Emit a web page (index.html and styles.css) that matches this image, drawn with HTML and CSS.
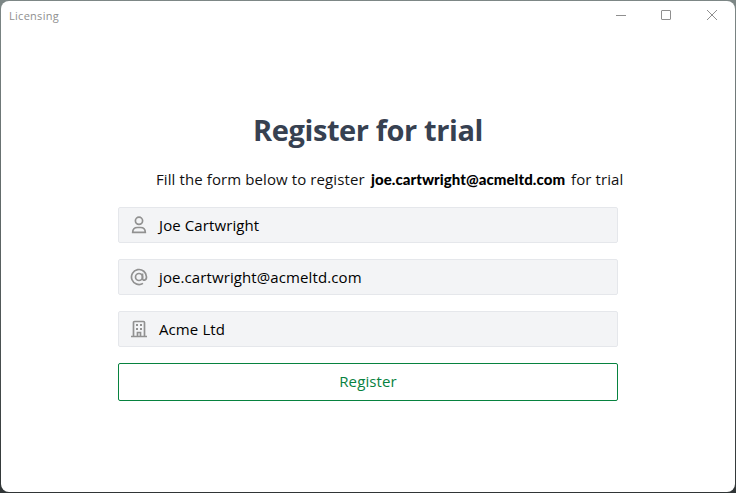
FILE: index.html
```
<!DOCTYPE html>
<html lang="en">
<head>
    <meta charset="UTF-8">
    <title>Licensing</title>
    <link rel="stylesheet" href="styles.css">
</head>
<body>
    <div class="window">
        <div class="title-bar">
            <span class="title">Licensing</span>
            <div class="controls">
                <svg width="12" height="12" viewBox="0 0 12 12"><path d="M1 6.5h10"/></svg>
                <svg width="12" height="12" viewBox="0 0 12 12"><rect x="1.5" y="1.5" width="9" height="9" rx="0.5"/></svg>
                <svg width="12" height="12" viewBox="0 0 12 12"><path d="M1 1l10 10M11 1L1 11"/></svg>
            </div>
        </div>
        <div class="content">
            <h1>Register for trial</h1>
            <p class="intro"><span class="before">Fill the form below to register</span><b>joe.cartwright@acmeltd.com</b><span>for trial</span></p>
            <div class="form">
                <div class="field">
                    <svg width="18" height="18" viewBox="0 0 18 18"><circle cx="9" cy="4.8" r="3.6"/><path d="M2.7 16.3c0-3.1 2.1-4.8 4.8-4.8h3c2.7 0 4.8 1.7 4.8 4.8z"/></svg>
                    <span>Joe Cartwright</span>
                </div>
                <div class="field">
                    <svg width="18" height="18" viewBox="0 0 18 18"><circle cx="9" cy="9" r="3.5"/><path d="M12.5 5.5v4.7c0 3 4 2.6 4-1.2a7.5 7.5 0 1 0-3.5 6.35"/></svg>
                    <span>joe.cartwright@acmeltd.com</span>
                </div>
                <div class="field">
                    <svg width="18" height="18" viewBox="0 0 18 18"><path d="M1 16.5h16M3.5 16V2.5q0-1 1-1h9q1 0 1 1V16M7.5 16v-3.5h3V16"/><path class="dots" d="M6 4h2v2H6zM10 4h2v2h-2zM6 8h2v2H6zM10 8h2v2h-2z"/></svg>
                    <span>Acme Ltd</span>
                </div>
                <button type="button">Register</button>
            </div>
        </div>
    </div>
</body>
</html>
```
FILE: styles.css
```
*{
    box-sizing: border-box;
}
body{
    margin: 0;
    height: 493px;
    padding: 1px;
    overflow: hidden;
    background: linear-gradient(to bottom, #7d8786, #5c6464 50%, #303536);
    font-family: "Open Sans", "Noto Sans", sans-serif;
}
.window{
    width: 734px;
    height: 491px;
    background-color: #fff;
    border-radius: 8px;
    overflow: hidden;
}
.title-bar{
    height: 28px;
    padding: 0 17px 0 8px;
    display: flex;
    align-items: center;
    justify-content: space-between;
}
.title{
    font-size: 11px;
    color: #8f8f8f;
    letter-spacing: 0.28px;
}
.controls{
    display: flex;
    gap: 34px;
}
.controls svg{
    fill: none;
    stroke: #8f8f8f;
    stroke-width: 1;
}
.controls svg:first-child{
    margin-right: -1px;
}
.content{
    width: 500px;
    margin: 0 auto;
    padding-top: 80px;
}
h1{
    margin: 0;
    height: 42px;
    line-height: 42px;
    font-size: 29px;
    letter-spacing: -0.4px;
    text-align: center;
    white-space: nowrap;
    color: #374151;
}
.intro{
    margin: 17px 0 0 38px;
    height: 22px;
    line-height: 22px;
    display: flex;
    white-space: nowrap;
    font-size: 15px;
    letter-spacing: 0.1px;
    color: #111;
}
.intro .before{
    width: 215px;
    flex-shrink: 0;
}
.intro b{
    width: 200px;
    flex-shrink: 0;
    font-family: Lato, sans-serif;
    font-size: 15px;
    font-weight: 900;
    letter-spacing: 0.06px;
    color: #000;
}
.form{
    margin-top: 17px;
    display: flex;
    flex-direction: column;
    gap: 16px;
}
.field{
    height: 36px;
    padding-left: 11px;
    display: flex;
    align-items: center;
    gap: 11px;
    border: 1px solid #e5e7eb;
    border-radius: 2px;
    background-color: #f3f4f6;
    font-size: 15px;
    letter-spacing: 0.1px;
    color: #000;
}
.field svg{
    fill: none;
    stroke: #919191;
    stroke-width: 1.7;
}
.field .dots{
    fill: #919191;
    stroke: none;
}
button{
    height: 38px;
    padding: 0 0 2px;
    border: 1px solid #07823f;
    border-radius: 2px;
    background-color: #fff;
    font-family: inherit;
    font-size: 15px;
    letter-spacing: 0.1px;
    color: #07823f;
}
```
